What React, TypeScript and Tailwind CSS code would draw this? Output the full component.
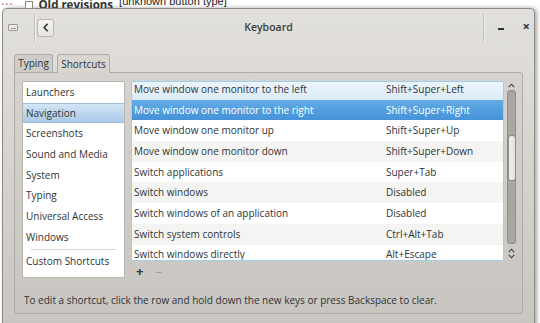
import React from 'react';

const categories = [
  'Launchers',
  'Navigation',
  'Screenshots',
  'Sound and Media',
  'System',
  'Typing',
  'Universal Access',
  'Windows',
];

const shortcuts = [
  { name: 'Move window one monitor to the left', keys: 'Shift+Super+Left' },
  { name: 'Move window one monitor to the right', keys: 'Shift+Super+Right' },
  { name: 'Move window one monitor up', keys: 'Shift+Super+Up' },
  { name: 'Move window one monitor down', keys: 'Shift+Super+Down' },
  { name: 'Switch applications', keys: 'Super+Tab' },
  { name: 'Switch windows', keys: 'Disabled' },
  { name: 'Switch windows of an application', keys: 'Disabled' },
  { name: 'Switch system controls', keys: 'Ctrl+Alt+Tab' },
  { name: 'Switch windows directly', keys: 'Alt+Escape' },
];

const Chevron = ({ up }: { up: boolean }) => (
  <svg width="7" height="5" viewBox="0 0 7 5" className="block">
    <path
      d={up ? 'M0.8 4.2 L3.5 1.2 L6.2 4.2' : 'M0.8 0.8 L3.5 3.8 L6.2 0.8'}
      fill="none"
      stroke="#3a3d3f"
      strokeWidth="1.1"
    />
  </svg>
);

export default function App() {
  return (
    <div className="w-[540px] h-[323px] overflow-hidden bg-white text-[#2e3436] font-['Open_Sans',sans-serif] text-[10px]">
      {/* page behind the dialog */}
      <div className="h-[8px] overflow-hidden flex items-end">
        <div className="flex items-center -mb-[4px] text-[12px] leading-[14px] text-[#333]">
          <span className="ml-[1px] tracking-[1px] text-[#777]">···</span>
          <span className="ml-[12px] w-[8px] h-[8px] border border-[#888] bg-white" />
          <span className="ml-[5px] font-bold text-[11.5px]">Old revisions</span>
        </div>
        <span className="ml-[6px] mb-[1px] text-[11px] leading-[12px] text-[#222] font-['Liberation_Sans',sans-serif]">
          [unknown button type]
        </span>
      </div>

      {/* dialog window */}
      <div className="ml-[2px] w-[533px] h-[320px] border border-b-0 border-[#8e8a86] rounded-t-[5px] bg-gradient-to-b from-[#e2e0dd] via-[#d6d3cf] to-[#c9c5c1] shadow-[2px_0_4px_rgba(0,0,0,0.35)] flex flex-col">
        {/* title bar */}
        <div className="h-[37px] grid grid-cols-[1fr_auto_1fr] items-center">
          <div className="flex items-center h-full">
            <div className="ml-[5px] w-[10px] h-[7px] border border-[#9a9794] rounded-[1px] bg-[#eceae7] flex items-end justify-center">
              <span className="mb-[1px] w-[5px] h-[1px] bg-[#9a9794]" />
            </div>
            <div className="ml-[16px] w-[2px] h-[28px] border-l border-[#c2bfbb] bg-[#f0eeec]" />
            <div className="ml-[1px] w-[17px] h-[18px] rounded-[3px] border border-[#b9b5b1] bg-gradient-to-b from-[#f6f5f4] to-[#e6e4e1] flex items-center justify-center">
              <svg width="6" height="9" viewBox="0 0 6 9">
                <path d="M4.6 0.8 L1.2 4.5 L4.6 8.2" fill="none" stroke="#2e3436" strokeWidth="1.6" />
              </svg>
            </div>
          </div>
          <div className="text-[10.5px] font-semibold text-[#3b3e40]">Keyboard</div>
          <div className="flex items-center justify-end h-full">
            <div className="w-[2px] h-[28px] border-l border-[#c2bfbb] bg-[#f0eeec]" />
            <span className="ml-[13px] w-[6px] h-[2px] bg-[#2e3436] mt-[3px]" />
            <span className="ml-[19px] mr-[4px] text-[13px] leading-none font-bold text-[#2e3436] -mt-[2px]">×</span>
          </div>
        </div>

        {/* notebook */}
        <div className="mt-[7px] mx-[11px] flex flex-col">
          <div className="flex items-end h-[19px]">
            <div className="w-[39px] h-[18px] border border-b-0 border-[#aeaaa6] rounded-t-[3px] bg-[#cfccc8] flex items-center justify-center text-[10px]">
              Typing
            </div>
            <div className="ml-[4px] w-[53px] h-[19px] -mb-[1px] relative z-10 border border-b-0 border-[#aeaaa6] rounded-t-[3px] bg-[#d9d6d2] flex items-center justify-center text-[10px]">
              Shortcuts
            </div>
          </div>
          <div className="h-[242px] border border-[#aeaaa6] rounded-b-[3px] rounded-tr-[3px] bg-gradient-to-b from-[#d6d3cf] to-[#c9c5c1] pt-[8px] pl-[7px] pr-[5px] flex flex-col">
            <div className="flex gap-[6px]">
              {/* categories */}
              <div className="w-[103px] h-[197px] border border-[#b9b5b1] rounded-[2px] bg-white flex flex-col">
                {categories.map((c) => (
                  <div
                    key={c}
                    className={
                      c === 'Navigation'
                        ? 'h-[20.7px] shrink-0 pl-[3px] flex items-center bg-gradient-to-b from-[#d2e5f5] to-[#a9cae8] border-y border-[#9dbfdd]'
                        : 'h-[20.7px] shrink-0 pl-[3px] flex items-center'
                    }
                  >
                    {c}
                  </div>
                ))}
                <div className="mt-[1px] mx-[8px] h-[1px] bg-[#d8d6d3]" />
                <div className="h-[20.7px] mt-[2px] pl-[3px] flex items-center">Custom Shortcuts</div>
              </div>

              {/* shortcuts list + scrollbar */}
              <div className="flex-1 flex flex-col">
                <div className="flex h-[180px]">
                  <div className="flex-1 border border-[#9ccfee] bg-white overflow-hidden">
                    <div className="-mt-[3px]">
                      {shortcuts.map((s, i) => {
                        const selected = i === 1;
                        const base = 'h-[20.7px] flex items-center pl-[2px]';
                        let bg = i % 2 === 1 ? ' bg-[#f4f4f3]' : ' bg-white';
                        if (i === 0) bg = ' bg-gradient-to-b from-[#eef6fc] to-[#dcebf8]';
                        if (selected) bg = ' bg-gradient-to-b from-[#62abe6] to-[#4592d8] text-white';
                        return (
                          <div key={s.name} className={base + bg}>
                            <span className="w-[252px]">{s.name}</span>
                            <span>{s.keys}</span>
                          </div>
                        );
                      })}
                    </div>
                  </div>
                  <div className="ml-[2px] w-[11px] flex flex-col items-center">
                    <div className="mt-[2px]">
                      <Chevron up />
                    </div>
                    <div className="mt-[2px] w-[9px] h-[154px] rounded-[3px] border border-[#8f8b87] bg-[#aaa6a2] flex flex-col items-center">
                      <div className="mt-[44px] w-[8px] h-[46px] rounded-[3px] border border-[#8f8b87] bg-gradient-to-r from-[#f2f0ee] to-[#e2dfdc]" />
                    </div>
                    <div className="mt-[4px] flex flex-col gap-[1px]">
                      <Chevron up />
                      <Chevron up={false} />
                    </div>
                  </div>
                </div>
                <div className="h-[20px] flex items-center pl-[5px] gap-[12px] text-[13px] leading-none">
                  <span className="font-bold text-[#2e3436]">+</span>
                  <span className="text-[#a09c98]">–</span>
                </div>
              </div>
            </div>
            <div className="mt-[12px] pl-[2px] text-[10px] leading-[14px]">
              To edit a shortcut, click the row and hold down the new keys or press Backspace to clear.
            </div>
          </div>
        </div>
      </div>
    </div>
  );
}
